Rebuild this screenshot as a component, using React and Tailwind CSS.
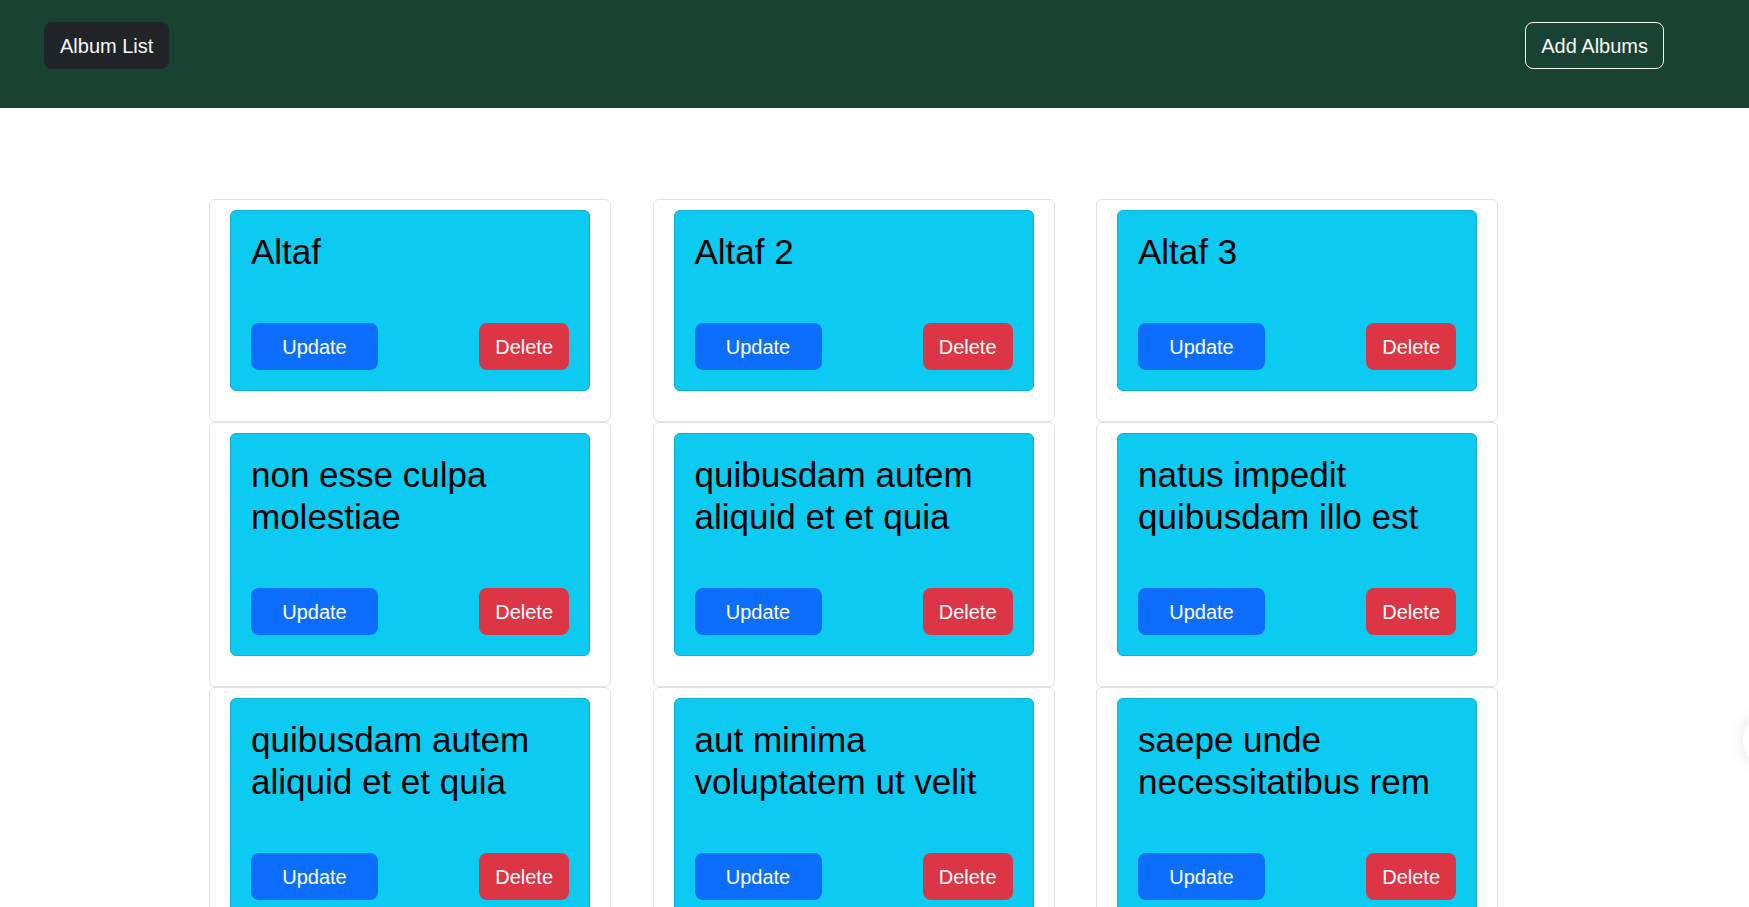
import React from 'react';

const albums = [
  { id: 1, title: 'Altaf' },
  { id: 2, title: 'Altaf 2' },
  { id: 3, title: 'Altaf 3' },
  { id: 4, title: 'non esse culpa molestiae' },
  { id: 5, title: 'quibusdam autem aliquid et et quia' },
  { id: 6, title: 'natus impedit quibusdam illo est' },
  { id: 7, title: 'quibusdam autem aliquid et et quia' },
  { id: 8, title: 'aut minima voluptatem ut velit' },
  { id: 9, title: 'saepe unde necessitatibus rem' },
];

const AlbumCard = ({ album }) => {
  return (
    <div className="bg-white border border-[#dee2e6] rounded-[6px] pt-[10px] px-[20px] pb-[30px]">
      <div className="bg-[#0dcaf0] border border-[#0bb0d2] rounded-[6px] pt-[20px] px-[20px] pb-[20px]">
        <h1 className="text-[35px] leading-[42px] text-black font-normal mb-[50px]">{album.title}</h1>
        <div className="flex justify-between">
          <button className="w-[127px] h-[47px] rounded-[8px] bg-[#0d6efd] text-white text-[20px]">Update</button>
          <button className="px-[16px] h-[47px] rounded-[8px] bg-[#dc3545] text-white text-[20px]">Delete</button>
        </div>
      </div>
    </div>
  );
};

export default function App() {
  return (
    <div className="min-h-screen bg-white font-['Liberation_Sans',Arial,sans-serif]">
      {/* Navbar */}
      <nav className="h-[108px] bg-[#1a4233] flex items-start justify-between pt-[22px] pl-[44px] pr-[85px]">
        <button className="h-[47px] px-[16px] rounded-[8px] bg-[#212529] text-[#f8f9fa] text-[20px]">Album List</button>
        <button className="h-[47px] px-[15px] rounded-[8px] border border-[#f8f9fa] text-[#f8f9fa] text-[20px]">Add Albums</button>
      </nav>

      {/* Album grid */}
      <div className="pt-[91px] pl-[209px] pb-10">
        <div className="grid grid-cols-[repeat(3,402px)] gap-x-[41.5px]">
          {albums.map((a) => (
            <AlbumCard key={a.id} album={a} />
          ))}
        </div>
      </div>

      {/* floating thing peeking at the right edge */}
      <div className="fixed left-[1743px] top-[712px] w-[56px] h-[56px] rounded-full bg-white shadow-[0_0_16px_rgba(0,0,0,0.12)]" />
    </div>
  );
}
